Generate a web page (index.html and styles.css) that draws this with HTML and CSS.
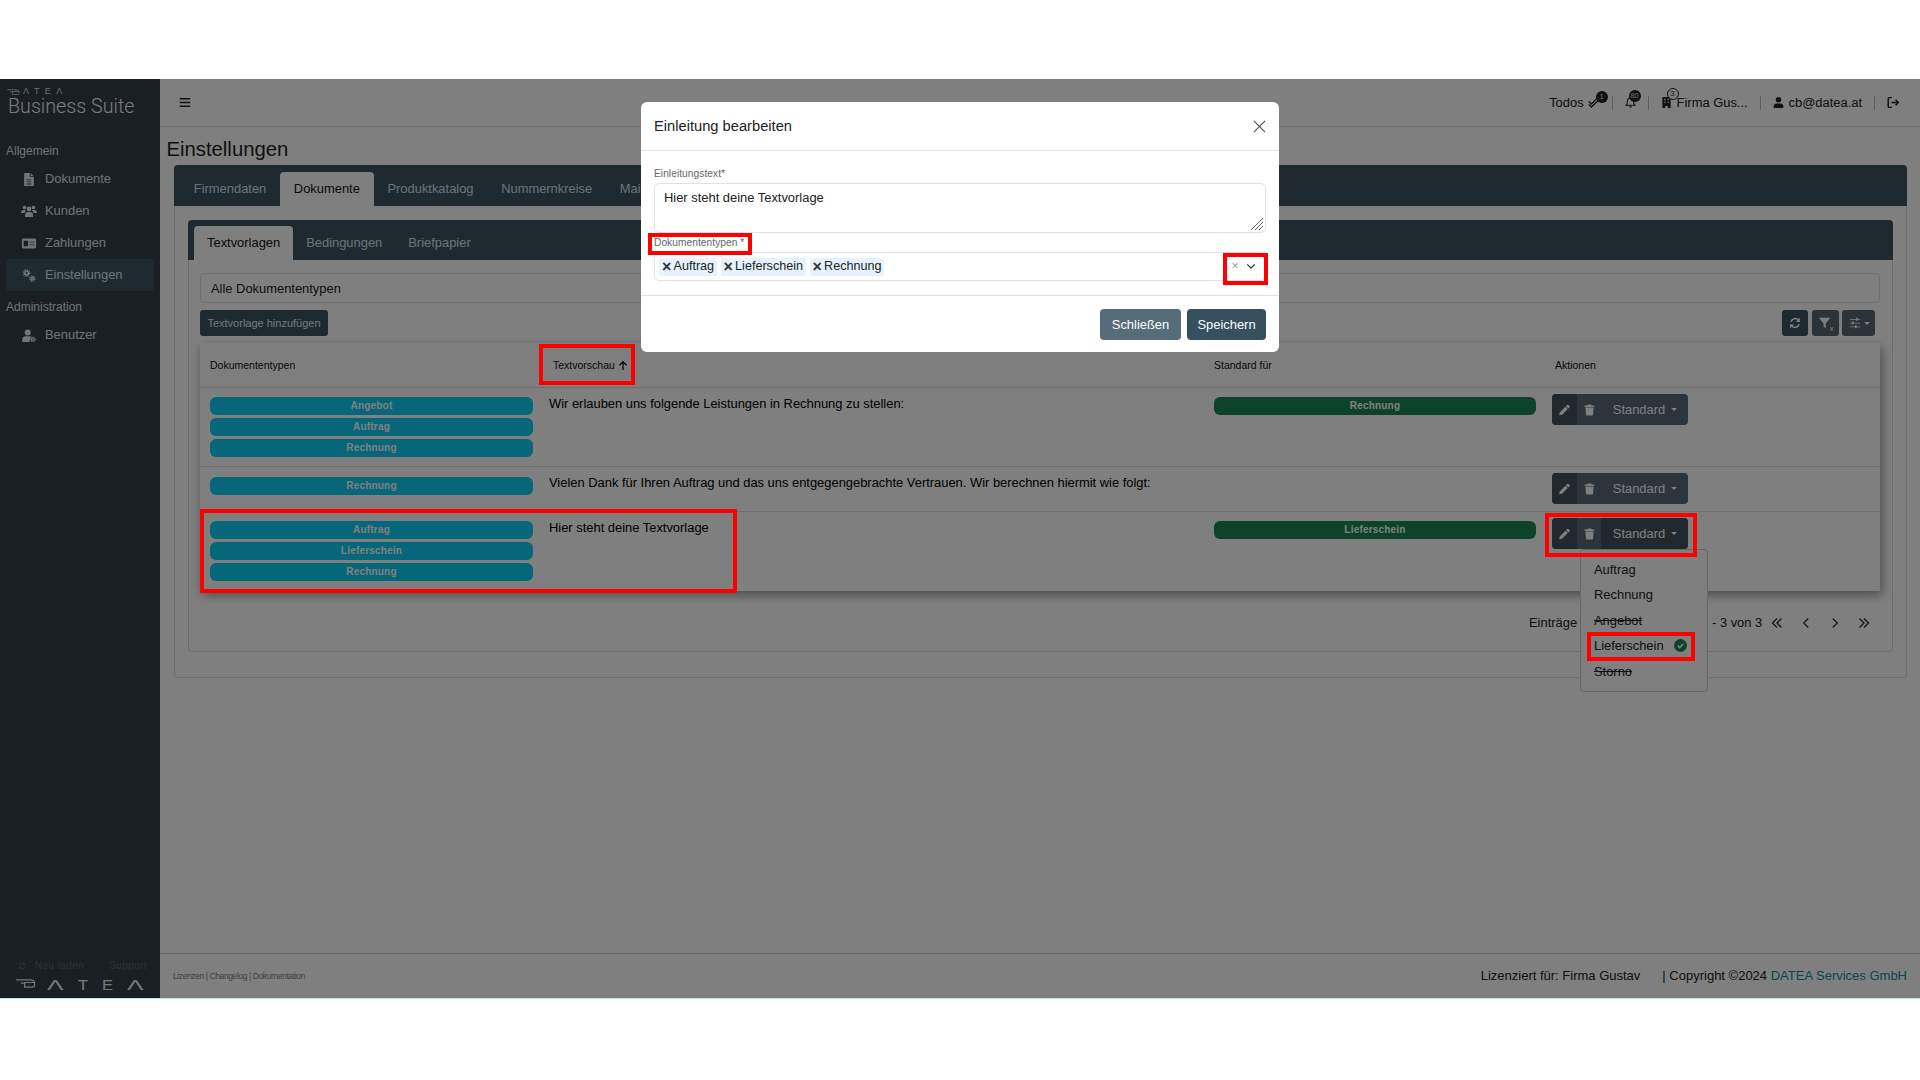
FILE: index.html
```html
<!DOCTYPE html>
<html lang="de">
<head>
<meta charset="utf-8">
<title>Einstellungen</title>
<link rel="stylesheet" href="styles.css">
</head>
<body>
<svg class="sprite" xmlns="http://www.w3.org/2000/svg">
  <symbol id="i-file" viewBox="0 0 16 16"><path fill-rule="evenodd" d="M3 0h6v5h5v11H2V1a1 1 0 0 1 1-1zM10 0l4 4h-4zM5 8v1h6V8zM5 10.500v1h6v-1zM5 13v1h6v-1z"/></symbol>
  <symbol id="i-users" viewBox="0 2.500 16 12"><circle cx="3.500" cy="4.500" r="1.800"/><circle cx="12.500" cy="4.500" r="1.800"/><circle cx="8" cy="6" r="2.400"/><path d="M0 10c0-2 1-3 2.500-3H5L3.500 10zM16 10c0-2-1-3-2.500-3H11l1.500 3zM4 14v-2c0-2 1.500-3 2.500-3h3c1 0 2.500 1 2.500 3v2z"/></symbol>
  <symbol id="i-money" viewBox="-1 1 18 14"><path fill-rule="evenodd" d="M1.500 2.500h13A1.500 1.500 0 0 1 16 4v8a1.500 1.500 0 0 1-1.500 1.500h-13A1.500 1.500 0 0 1 0 12V4a1.500 1.500 0 0 1 1.500-1.500zM2 5v6h5V5zM9 6v1h5V6zM9 9v1h5V9z"/></symbol>
  <symbol id="i-cogs" viewBox="0 0 16 16"><g fill="none" stroke="currentColor"><circle cx="5" cy="5" r="2.200" stroke-width="2"/><circle cx="5" cy="5" r="3.800" stroke-width="1.800" stroke-dasharray="1.600 1.400"/><circle cx="12" cy="11.800" r="1.600" stroke-width="1.800"/><circle cx="12" cy="11.800" r="3.100" stroke-width="1.600" stroke-dasharray="1.500 1.100"/></g></symbol>
  <symbol id="i-usercog" viewBox="0 0 16 15"><circle cx="6.500" cy="4" r="3.500"/><path d="M0 15v-2c0-3 2-4.500 4-4.500h5c.5 0 1 .1 1.300.3L8.500 15z"/><g fill="none" stroke="currentColor"><circle cx="12.500" cy="12" r="1.500" stroke-width="1.300"/><circle cx="12.500" cy="12" r="2.700" stroke-width="1.200" stroke-dasharray="1.300 1.100"/></g></symbol>
  <symbol id="i-pencil" viewBox="0 0 16 16"><path d="M11.800.8a1.500 1.500 0 0 1 2.100 0l1.300 1.300a1.500 1.500 0 0 1 0 2.100L13.600 5.800 10.200 2.400zM9.400 3.200l3.400 3.400-8.300 8.300L.4 15.600l.7-4.100z"/></symbol>
  <symbol id="i-trash" viewBox="0 0 16 16"><path d="M5.500 0h5l.8 1.500H15v2H1v-2h3.700zM2 4.500h12L13.200 15a1 1 0 0 1-1 1H3.800a1 1 0 0 1-1-1z"/></symbol>
  <symbol id="i-sync" viewBox="0 0 16 16"><path fill="none" stroke="currentColor" stroke-width="2" d="M2.500 6.500A5.800 5.800 0 0 1 12.800 4.500M13.500 9.500A5.800 5.800 0 0 1 3.200 11.500"/><path d="M14.500 1v5.500H9zM1.500 15V9.500H7z"/></symbol>
  <symbol id="i-filter" viewBox="0 0 16 16"><path d="M0 1h15L9 8.500V15L6 12.500V8.500z"/></symbol>
  <symbol id="i-sliders" viewBox="0 0 16 16"><path d="M1 2.500h14v1H1zM1 7.500h14v1H1zM1 12.500h14v1H1z"/><path d="M9.500 1h2v4h-2zM4 6h2v4H4zM8 11h2v4H8z"/></symbol>
  <symbol id="i-check" viewBox="0 0 16 16"><path fill="none" stroke="currentColor" stroke-width="1.800" d="M1 10.500l3.500 3.500L15 4M1 6.500 4.500 10 13 1.500"/></symbol>
  <symbol id="i-bell" viewBox="0 0 16 16"><path fill="none" stroke="currentColor" stroke-width="1.500" d="M8 1.500c-3 0-4.500 2.500-4.500 5 0 3-1 4.500-2 5.500h13c-1-1-2-2.500-2-5.500 0-2.500-1.500-5-4.500-5z"/><path d="M6 13.500h4a2 2 0 0 1-4 0z"/></symbol>
  <symbol id="i-building" viewBox="0 0 16 16"><path fill-rule="evenodd" d="M2 0h12v16h-4v-3H6v3H2zM4.500 2.500v2h2v-2zM9.500 2.500v2h2v-2zM4.500 6.500v2h2v-2zM9.500 6.500v2h2v-2z"/></symbol>
  <symbol id="i-user" viewBox="0 0 16 16"><circle cx="8" cy="4" r="4"/><path d="M1 16v-2.500C1 11 3 9.500 5 9.500h6c2 0 4 1.500 4 4V16z"/></symbol>
  <symbol id="i-exit" viewBox="0 0 16 16"><path fill="none" stroke="currentColor" stroke-width="1.800" d="M6 2H3a1.500 1.500 0 0 0-1.500 1.500v9A1.500 1.500 0 0 0 3 14h3M5.500 8H14M10.500 4.500 14 8l-3.500 3.500"/></symbol>
  <symbol id="i-up" viewBox="0 0 16 16"><path fill="none" stroke="currentColor" stroke-width="2" d="M8 15V2M2.500 7.500 8 2l5.500 5.500"/></symbol>
  <symbol id="i-bars" viewBox="0 0 16 16"><path d="M1 2h14v2H1zM1 7h14v2H1zM1 12h14v2H1z"/></symbol>
  <symbol id="i-d" viewBox="0 0 30 16"><path fill="none" stroke="currentColor" stroke-width="1.800" d="M0 4h22a6 6 0 0 1 6 6v1a4 4 0 0 1-4 4H13V8h15M7 9h6"/></symbol>
  <symbol id="i-dbl-l" viewBox="0 0 16 16"><path fill="none" stroke="currentColor" stroke-width="1.800" d="M8 2 2 8l6 6M14 2 8 8l6 6"/></symbol>
  <symbol id="i-dbl-r" viewBox="0 0 16 16"><path fill="none" stroke="currentColor" stroke-width="1.800" d="M2 2l6 6-6 6M8 2l6 6-6 6"/></symbol>
  <symbol id="i-l" viewBox="0 0 16 16"><path fill="none" stroke="currentColor" stroke-width="1.800" d="M11 2 5 8l6 6"/></symbol>
  <symbol id="i-r" viewBox="0 0 16 16"><path fill="none" stroke="currentColor" stroke-width="1.800" d="M5 2l6 6-6 6"/></symbol>
</svg>

<div class="top-gap"></div>
<div class="app">
  <aside class="sidebar">
    <div class="brand">
      <div class="brand-mark"><svg class="brand-d"><use href="#i-d"/></svg><span>Λ T E Λ</span></div>
      <div class="brand-name">Business Suite</div>
    </div>
    <nav class="nav">
      <div class="nav-head">Allgemein</div>
      <a class="nav-item"><svg class="nav-icon"><use href="#i-file"/></svg>Dokumente</a>
      <a class="nav-item"><svg class="nav-icon"><use href="#i-users"/></svg>Kunden</a>
      <a class="nav-item"><svg class="nav-icon"><use href="#i-money"/></svg>Zahlungen</a>
      <a class="nav-item active"><svg class="nav-icon"><use href="#i-cogs"/></svg>Einstellungen</a>
      <div class="nav-head admin">Administration</div>
      <a class="nav-item"><svg class="nav-icon"><use href="#i-usercog"/></svg>Benutzer</a>
    </nav>
    <div class="side-foot">
      <div class="side-links"><span class="reload"><svg class="reload-icon"><use href="#i-sync"/></svg>Neu laden</span><span>Support</span></div>
      <div class="side-logo"><svg class="side-d"><use href="#i-d"/></svg><span class="logo-a">Λ</span><span class="logo-t">T</span><span class="logo-e">E</span><span class="logo-a">Λ</span></div>
    </div>
  </aside>

  <div class="main">
    <header class="topbar">
      <svg class="burger"><use href="#i-bars"/></svg>
      <div class="top-right">
        <span class="top-item">Todos <span class="icon-wrap"><svg class="top-icon check"><use href="#i-check"/></svg><span class="bubble b-todo">1</span></span></span>
        <span class="sep"></span>
        <span class="icon-wrap"><svg class="top-icon bell"><use href="#i-bell"/></svg><span class="bubble b-bell">80</span></span>
        <span class="sep"></span>
        <span class="top-item tight"><span class="icon-wrap"><svg class="top-icon"><use href="#i-building"/></svg><span class="bubble b-build">3</span></span>Firma Gus...</span>
        <span class="sep"></span>
        <span class="top-item tight"><svg class="top-icon"><use href="#i-user"/></svg>cb@datea.at</span>
        <span class="sep"></span>
        <svg class="top-icon exit"><use href="#i-exit"/></svg>
      </div>
    </header>

    <div class="content">
      <h1 class="page-title">Einstellungen</h1>
      <section class="card outer">
        <div class="tabbar outer-tabs">
          <span class="tab">Firmendaten</span>
          <span class="tab on">Dokumente</span>
          <span class="tab">Produktkatalog</span>
          <span class="tab">Nummernkreise</span>
          <span class="tab">Mail</span>
        </div>
        <div class="outer-body">
          <section class="card inner">
            <div class="tabbar inner-tabs">
              <span class="tab">Textvorlagen</span>
              <span class="tab plain">Bedingungen</span>
              <span class="tab plain">Briefpapier</span>
            </div>
            <div class="inner-body">
              <div class="filter-select">Alle Dokumententypen</div>
              <div class="toolbar">
                <button class="btn add">Textvorlage hinzufügen</button>
                <div class="tools">
                  <button class="btn tool dark"><svg class="tool-icon"><use href="#i-sync"/></svg></button>
                  <button class="btn tool"><svg class="tool-icon"><use href="#i-filter"/></svg><span class="sub-x">x</span></button>
                  <button class="btn tool wide"><svg class="tool-icon"><use href="#i-sliders"/></svg><span class="caret"></span></button>
                </div>
              </div>

              <div class="table">
                <div class="row head">
                  <div class="cell">Dokumententypen</div>
                  <div class="cell th-sorted">Textvorschau <svg class="up"><use href="#i-up"/></svg></div>
                  <div class="cell">Standard für</div>
                  <div class="cell th-actions">Aktionen</div>
                </div>

                <div class="row">
                  <div class="cell badges"><span class="badge">Angebot</span><span class="badge">Auftrag</span><span class="badge">Rechnung</span></div>
                  <div class="cell text">Wir erlauben uns folgende Leistungen in Rechnung zu stellen:</div>
                  <div class="cell badges"><span class="badge green">Rechnung</span></div>
                  <div class="cell actions">
                    <div class="group">
                      <span class="seg pen"><svg class="seg-icon"><use href="#i-pencil"/></svg></span>
                      <span class="seg bin"><svg class="seg-icon"><use href="#i-trash"/></svg></span>
                      <span class="seg std">Standard<span class="caret"></span></span>
                    </div>
                  </div>
                </div>

                <div class="row mid">
                  <div class="cell badges"><span class="badge">Rechnung</span></div>
                  <div class="cell text">Vielen Dank für Ihren Auftrag und das uns entgegengebrachte Vertrauen. Wir berechnen hiermit wie folgt:</div>
                  <div class="cell badges"></div>
                  <div class="cell actions">
                    <div class="group">
                      <span class="seg pen"><svg class="seg-icon"><use href="#i-pencil"/></svg></span>
                      <span class="seg bin"><svg class="seg-icon"><use href="#i-trash"/></svg></span>
                      <span class="seg std">Standard<span class="caret"></span></span>
                    </div>
                  </div>
                </div>

                <div class="row last">
                  <div class="cell badges"><span class="badge">Auftrag</span><span class="badge">Lieferschein</span><span class="badge">Rechnung</span></div>
                  <div class="cell text">Hier steht deine Textvorlage</div>
                  <div class="cell badges"><span class="badge green">Lieferschein</span></div>
                  <div class="cell actions">
                    <div class="group">
                      <span class="seg pen"><svg class="seg-icon"><use href="#i-pencil"/></svg></span>
                      <span class="seg bin"><svg class="seg-icon"><use href="#i-trash"/></svg></span>
                      <span class="seg std open">Standard<span class="caret"></span></span>
                    </div>
                    <ul class="menu">
                      <li>Auftrag</li>
                      <li>Rechnung</li>
                      <li class="struck">Angebot</li>
                      <li class="checked">Lieferschein<span class="tick"><svg viewBox="0 0 12 12"><path d="M3.500 6.200 5.300 8l3.300-3.600"/></svg></span></li>
                      <li class="struck">Storno</li>
                    </ul>
                  </div>
                </div>
              </div>

              <div class="pager">
                <span class="pager-label">Einträge</span>
                <span class="pager-range">- 3 von 3</span>
                <svg class="pager-icon"><use href="#i-dbl-l"/></svg>
                <svg class="pager-icon"><use href="#i-l"/></svg>
                <svg class="pager-icon"><use href="#i-r"/></svg>
                <svg class="pager-icon"><use href="#i-dbl-r"/></svg>
              </div>
            </div>
          </section>
        </div>
      </section>
    </div>

    <footer class="footer">
      <div class="foot-links">Lizenzen | Changelog | Dokumentation</div>
      <div class="foot-right"><span class="licensed">Lizenziert für: Firma Gustav</span><span>| Copyright ©2024 <span class="teal">DATEA Services GmbH</span></span></div>
    </footer>
  </div>
  <div class="backdrop"></div>
</div>
<div class="bottom-gap"></div>

<div class="modal">
  <div class="modal-head">
    <span class="modal-title">Einleitung bearbeiten</span>
    <svg class="modal-close" viewBox="0 0 14 14"><path d="M1 1l12 12M13 1 1 13"/></svg>
  </div>
  <div class="modal-body">
    <label class="field-label">Einleitungstext*</label>
    <div class="textarea">Hier steht deine Textvorlage
      <svg class="grip" viewBox="0 0 14 14"><path d="M13 1 1 13M13 5 5 13M13 9l-4 4"/></svg>
    </div>
    <label class="field-label second">Dokumententypen *</label>
    <div class="multi">
      <span class="chip"><b>×</b>Auftrag</span>
      <span class="chip"><b>×</b>Lieferschein</span>
      <span class="chip"><b>×</b>Rechnung</span>
      <span class="multi-clear">×</span>
      <svg class="multi-arrow" viewBox="0 0 12 8"><path d="M1.500 1.500 6 6l4.500-4.500"/></svg>
    </div>
  </div>
  <div class="modal-foot">
    <button class="btn-modal close">Schließen</button>
    <button class="btn-modal save">Speichern</button>
  </div>
</div>

<div class="mark m-sort"></div>
<div class="mark m-row"></div>
<div class="mark m-actions"></div>
<div class="mark m-item"></div>
<div class="mark m-label"></div>
<div class="mark m-clear"></div>
</body>
</html>
```
FILE: styles.css
```css
* { box-sizing: border-box; }
html, body { margin: 0; padding: 0; }
body { width: 1920px; height: 1080px; overflow: hidden; background: #fff; font: 12.920px/1.2 "Liberation Sans", Arial, sans-serif; color: #111; }
.sprite { display: none; }
svg { fill: currentColor; display: block; }

.top-gap { height: 79px; }
.bottom-gap { height: 81px; }
.app { position: relative; height: 920px; display: flex; border-bottom: 1px solid #b9e6e6; background: #fff; }
.backdrop { position: absolute; inset: 0 0 0 0; background: rgba(0, 0, 0, .5); }

/* sidebar */
.sidebar { width: 160px; flex: none; background: #343e48; color: #e8ecef; display: flex; flex-direction: column; }
.brand { height: 48px; padding: 8px 0 0 7px; }
.brand-mark { display: flex; align-items: center; height: 8px; font-size: 9px; letter-spacing: 1.500px; color: #d8dcdf; }
.brand-d { width: 13px; height: 7px; margin-right: 3px; }
.brand-name { font: 300 19.700px/22px Roboto, sans-serif; color: #f4f6f7; margin: 1px 0 0 1px; white-space: nowrap; }
.nav { padding: 12px 6px 0; }
.nav-head { height: 24px; line-height: 24px; color: #dfe4e8; font-size: 12px; }
.nav-head.admin { height: 28px; line-height: 32px; }
.nav-item { height: 32px; display: flex; align-items: center; border-radius: 4px; color: #dfe4e8; }
.nav-item.active { background: #3c5461; }
.nav-icon { width: 16px; height: 13px; margin: 0 8px 0 15px; color: #e4e8ea; }
.side-foot { margin-top: auto; padding: 0 13px 5px 16px; }
.side-links { display: flex; justify-content: space-between; font-size: 10px; letter-spacing: .4px; color: #5a636b; }
.reload { display: flex; align-items: center; }
.reload-icon { width: 8px; height: 8px; margin: 0 9px 0 2px; }
.side-logo { position: relative; height: 16px; margin-top: 5px; font-size: 15px; line-height: 16px; color: #f0f2f3; }
.side-logo span { position: absolute; top: 0; transform-origin: left center; }
.side-d { width: 20px; height: 11px; margin-top: 3px; }
.logo-a { transform: scaleX(1.650); }
.logo-a:nth-child(2) { left: 31px; }
.logo-a:nth-child(5) { left: 111px; }
.logo-t { left: 62px; transform: scaleX(1.100); }
.logo-e { left: 86px; transform: scaleX(1.100); }

/* main */
.main { flex: 1; min-width: 0; display: flex; flex-direction: column; background: #fff; }
.topbar { height: 48px; flex: none; border-bottom: 1px solid #ddd; display: flex; align-items: center; justify-content: space-between; padding: 0 20px 0 19px; color: #222; }
.burger { width: 12px; height: 13px; }
.top-right { display: flex; align-items: center; gap: 12px; }
.top-item { display: flex; align-items: center; gap: 4px; }
.top-item.tight { gap: 5px; }
.icon-wrap { position: relative; display: block; }
.top-icon { width: 11px; height: 13px; }
.top-icon.check { width: 12px; }
.top-icon.bell { height: 15px; }
.top-icon.exit { width: 13px; }
.sep { width: 1px; height: 14px; background: #bbb; }
.bubble { position: absolute; width: 12px; height: 12px; border-radius: 50%; background: #222; color: #ddd; font-size: 7.500px; line-height: 12px; text-align: center; }
.b-todo { left: 8px; top: -5px; }
.b-bell { left: 4px; top: -5px; }
.b-build { left: 6px; top: -8px; background: #fff; border: 1px solid #222; color: #222; line-height: 10px; }

.content { flex: 1; padding: 0 13px 0 6px; }
.page-title { margin: 0 0 0 .5px; height: 38px; padding-top: 10px; font: 400 20.300px/24px "Liberation Sans", Arial, sans-serif; color: #222; }
.card { border: 1px solid #ddd; border-radius: 4px; }
.outer { margin-left: 8px; height: 513px; border-top: 0; }
.tabbar { background: #3c5461; display: flex; align-items: flex-end; border-radius: 4px 4px 0 0; color: #d8e2e8; margin: 0 -1px; }
.outer-tabs { height: 41px; padding-left: 6px; }
.outer-tabs .tab { height: 34px; padding: 0 13.800px; }
.tab { display: flex; align-items: center; border-radius: 4px 4px 0 0; white-space: nowrap; }
.tab.on, .inner-tabs .tab:first-child { background: #fff; color: #111; }
.outer-body { padding: 14px 13px 0 13px; }
.inner { height: 432px; border-top: 0; }
.inner-tabs { height: 40px; padding-left: 6px; }
.inner-tabs .tab { height: 34px; padding: 0 13px; }
.inner-body { padding: 13px 12px 0 11px; }
.filter-select { height: 30px; border: 1px solid #ddd; border-radius: 5px; padding: 0 10px; line-height: 30px; color: #222; }
.toolbar { display: flex; justify-content: space-between; margin: 7px 0; }
.btn { height: 26px; border: 0; border-radius: 3px; font: 11px "Liberation Sans", Arial, sans-serif; color: #e4ecf0; background: #3c5461; }
.btn.add { width: 128px; padding: 0; }
.tools { display: flex; gap: 3.500px; margin-right: 5px; }
.tool { position: relative; width: 27px; padding: 0; background: #596874; display: flex; align-items: center; justify-content: center; color: #fff; }
.tool.dark { width: 26px; background: #3c5461; }
.tool.wide { width: 33px; justify-content: flex-start; padding-left: 7px; gap: 2px; }
.tool-icon { width: 12px; height: 12px; }
.sub-x { position: absolute; right: 5px; bottom: 4px; font-size: 7px; }
.caret { display: inline-block; width: 0; height: 0; border: 3px solid transparent; border-top-color: currentColor; border-bottom: 0; margin-left: 6px; vertical-align: middle; }
.tool .caret { margin-left: 1px; }

.table { background: #fff; box-shadow: 2px 4px 10px rgba(0, 0, 0, .4); }
.row { display: grid; grid-template-columns: 339px 665px 338px 1fr; border-top: 1px solid #ddd; }
.row.head { border-top: 0; height: 44px; align-items: center; font-size: 10.500px; color: #111; background: #fcfcfc; }
.row.last { min-height: 80px; }
.cell { padding: 0 10px; }
.th-sorted { padding-left: 14px; display: flex; align-items: center; gap: 3px; }
.th-actions { padding-left: 13px; }
.up { width: 10px; height: 11px; }
.badges { display: flex; flex-direction: column; gap: 3px; padding: 9px 6px 9px 10px; }
.mid .badges { padding-top: 10px; }
.badge { display: block; height: 18px; line-height: 18px; border-radius: 6px; background: #0dcdf4; color: #fff; font-size: 10px; font-weight: 700; text-align: center; letter-spacing: .2px; }
.badge.green { background: #198754; }
.text { padding-top: 9px; padding-left: 10px; line-height: 14px; color: #000; }
.actions { position: relative; padding: 6px 0 7px 10px; }
.group { display: flex; width: 136px; height: 31px; border-radius: 4px; overflow: hidden; background: #586878; color: #fff; }
.seg { display: flex; align-items: center; justify-content: center; }
.seg-icon { width: 11px; height: 12px; }
.pen { width: 25px; background: #44525c; }
.bin { width: 24px; }
.std { flex: 1; padding-left: 1px; }
.std.open { background: #44525c; }

.menu { position: absolute; left: 38px; top: 37px; width: 128px; height: 143px; margin: 0; padding: 6.800px 0 0; list-style: none; background: #fff; border: 1px solid #ccc; border-radius: 4px; color: #222; }
.menu li { height: 25.400px; line-height: 25px; padding-left: 13px; display: flex; align-items: center; }
.menu .struck { text-decoration: line-through; }
.tick { width: 13px; height: 13px; border-radius: 50%; background: #198754; margin-left: 10px; }
.tick svg { width: 13px; height: 13px; fill: none; stroke: #fff; stroke-width: 1.500; }

.pager { position: relative; height: 63px; display: flex; align-items: center; padding-left: 1329px; color: #222; }
.pager-label { width: 48px; }
.pager-range { margin-left: 135px; width: 49px; white-space: nowrap; }
.pager-icon { width: 12px; height: 12px; margin-left: 17px; color: #333; flex: none; }
.pager-icon:first-of-type { margin-left: 10px; }

.footer { height: 45px; border-top: 1px solid #ccc; display: flex; align-items: center; justify-content: space-between; padding: 0 13px; color: #222; }
.foot-links { font-size: 8.500px; letter-spacing: -.4px; color: #76858f; }
.foot-right { font-size: 13px; display: flex; gap: 22px; white-space: nowrap; }
.teal { color: #0f8ea0; }

/* modal */
.modal { position: absolute; left: 641px; top: 102px; width: 638px; height: 250px; background: #fff; border-radius: 6px; }
.modal-head { height: 49px; padding: 1px 13px 0; border-bottom: 1px solid #dee2e6; display: flex; align-items: center; justify-content: space-between; }
.modal-title { font-size: 14.700px; color: #222; }
.modal-close { width: 13px; height: 13px; fill: none; stroke: #555; stroke-width: 1.300; }
.modal-body { height: 145px; border-bottom: 1px solid #dee2e6; padding: 17px 13px 0; }
.field-label { display: block; font-size: 10.200px; line-height: 12px; letter-spacing: .05px; color: #666; }
.field-label.second { margin-top: 4px; }
.textarea { position: relative; height: 50px; margin-top: 3px; border: 1px solid #dee2e6; border-radius: 5px; padding: 6px 9px; color: #222; line-height: 15px; }
.grip { position: absolute; right: 1px; bottom: 1px; width: 14px; height: 14px; fill: none; stroke: #666; stroke-width: 1; }
.multi { display: flex; align-items: center; gap: 3.500px; height: 29px; margin-top: 3px; padding-left: 4px; border: 1px solid #dee2e6; border-radius: 5px; color: #222; }
.chip { display: flex; align-items: center; gap: 2.500px; height: 18px; padding: 0 3px; background: #e6f2ff; border-radius: 2px; white-space: nowrap; font-size: 12.600px; }
.chip b { width: 9px; font-size: 16px; line-height: 14px; color: #333; text-align: center; }
.multi-clear { margin-left: auto; color: #999; font-size: 12px; }
.multi-arrow { width: 10px; height: 7px; margin: 0 9px 0 4px; fill: none; stroke: #333; stroke-width: 1.500; }
.modal-foot { display: flex; justify-content: flex-end; gap: 6px; padding: 13px 13px 0; }
.btn-modal { width: 81px; height: 31px; border: 0; border-radius: 4px; color: #fff; font: 12.920px "Liberation Sans", Arial, sans-serif; }
.btn-modal.close { background: #566c79; }
.btn-modal.save { width: 79px; background: #36505f; }

/* annotation boxes */
.mark { position: absolute; border: 4px solid #f00; }
.m-sort { left: 539px; top: 344px; width: 96px; height: 41px; }
.m-row { left: 200px; top: 509px; width: 537px; height: 84px; }
.m-actions { left: 1545px; top: 513px; width: 152px; height: 44px; }
.m-item { left: 1587px; top: 632px; width: 108px; height: 29px; }
.m-label { left: 648px; top: 233px; width: 104px; height: 22px; }
.m-clear { left: 1223px; top: 253px; width: 45px; height: 32px; }
```
